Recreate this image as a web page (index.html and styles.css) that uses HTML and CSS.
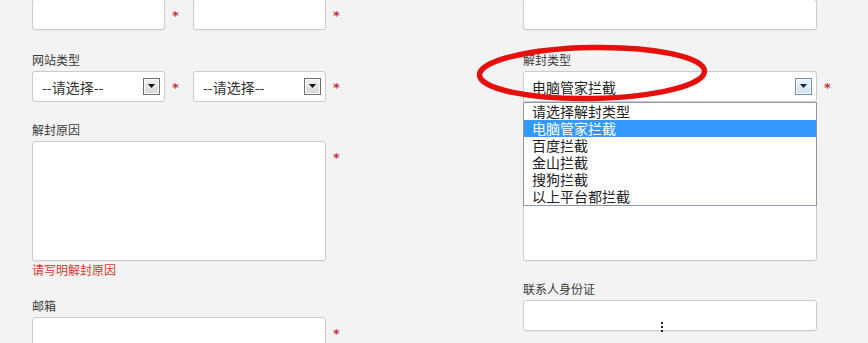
FILE: index.html
```html
<!DOCTYPE html>
<html lang="zh-CN">
<head>
<meta charset="utf-8">
<title>解封申请</title>
<link rel="stylesheet" href="styles.css">
</head>
<body>
<div class="page">
  <div class="form">
    <div class="col">
      <div class="row first">
        <input class="box half" type="text"><span class="req">*</span>
        <input class="box half" type="text"><span class="req">*</span>
      </div>
      <div class="field gap22">
        <div class="label">网站类型</div>
        <div class="row">
          <div class="select half">
            <span class="sel-text">--请选择--</span>
            <span class="sel-btn"><svg width="7" height="4" viewBox="0 0 7 4"><polygon points="0,0 7,0 3.5,4" fill="#111"/></svg></span>
          </div><span class="req">*</span>
          <div class="select half">
            <span class="sel-text">--请选择--</span>
            <span class="sel-btn"><svg width="7" height="4" viewBox="0 0 7 4"><polygon points="0,0 7,0 3.5,4" fill="#111"/></svg></span>
          </div><span class="req">*</span>
        </div>
      </div>
      <div class="field gap20">
        <div class="label">解封原因</div>
        <div class="row">
          <textarea class="box full area"></textarea><span class="req">*</span>
        </div>
        <div class="error">请写明解封原因</div>
      </div>
      <div class="field gap20">
        <div class="label">邮箱</div>
        <div class="row">
          <input class="box full" type="text"><span class="req">*</span>
        </div>
      </div>
    </div>

    <div class="col">
      <div class="row first">
        <input class="box full" type="text">
      </div>
      <div class="field gap22">
        <div class="label">解封类型</div>
        <div class="row">
          <div class="select full open">
            <span class="sel-text big">电脑管家拦截</span>
            <span class="sel-btn hot"><svg width="7" height="4" viewBox="0 0 7 4"><polygon points="0,0 7,0 3.5,4" fill="#1a2533"/></svg></span>
            <ul class="dropdown">
              <li>请选择解封类型</li>
              <li class="active">电脑管家拦截</li>
              <li>百度拦截</li>
              <li>金山拦截</li>
              <li>搜狗拦截</li>
              <li>以上平台都拦截</li>
            </ul>
          </div><span class="req">*</span>
        </div>
      </div>
      <div class="row gap39">
        <textarea class="box full area"></textarea>
      </div>
      <div class="field gap20">
        <div class="label">联系人身份证</div>
        <div class="row">
          <input class="box full" type="text">
        </div>
      </div>
    </div>
  </div>

  <svg class="mark" width="250" height="72" viewBox="0 0 250 72">
    <ellipse cx="122" cy="33" rx="112.5" ry="25.5" fill="none" stroke="#e5100c" stroke-width="5.5" transform="rotate(-1 122 33)"/>
  </svg>
  <span class="cursor"></span>
</div>
</body>
</html>
```

FILE: styles.css
```css
html, body {
  margin: 0;
  padding: 0;
  background: #f3f3f3;
}

body {
  font-family: "Noto Sans CJK SC", "Noto Sans", sans-serif;
  color: #333;
  overflow: hidden;
}

.page {
  position: relative;
  width: 868px;
  height: 343px;
  overflow: hidden;
}

.form {
  display: grid;
  grid-template-columns: 491px 322px;
  padding-left: 32px;
}

.col {
  display: flex;
  flex-direction: column;
}

.row {
  display: flex;
  align-items: flex-start;
}

.row.first {
  margin-top: -1px;
}

.field {
  display: flex;
  flex-direction: column;
}

.gap22 { margin-top: 22px; }
.gap20 { margin-top: 20px; }
.gap39 { margin-top: 39px; }

.label {
  font-size: 12px;
  line-height: 16px;
  height: 16px;
  margin-bottom: 3px;
  color: #3a3a3a;
}

.box {
  display: block;
  box-sizing: border-box;
  height: 31px;
  margin: 0;
  padding: 0 8px;
  border: 1px solid #cbcbcb;
  border-radius: 3px;
  background: #fff;
  box-shadow: 0 1px 1px rgba(0, 0, 0, 0.04);
  font: inherit;
  outline: none;
}

.half { width: 133px; }
.full { width: 294px; }

.area {
  height: 120px;
  resize: none;
}

.req {
  display: block;
  width: 21px;
  padding-left: 7px;
  height: 31px;
  line-height: 33px;
  font-size: 13px;
  font-family: "DejaVu Sans", sans-serif;
  font-weight: bold;
  color: #c7343a;
}

.select {
  position: relative;
  display: flex;
  align-items: center;
  justify-content: space-between;
  box-sizing: border-box;
  height: 31px;
  padding: 0 4px 0 9px;
  border: 1px solid #cbcbcb;
  border-radius: 3px;
  background: #fff;
}

.select.open {
  padding-left: 8px;
}

.sel-text {
  font-size: 14px;
  line-height: 18px;
  color: #333;
  padding-top: 1px;
}

.sel-text.big {
  color: #222;
}

.sel-btn {
  display: flex;
  align-items: center;
  justify-content: center;
  box-sizing: border-box;
  width: 17px;
  height: 17px;
  margin-top: -1px;
  border: 1px solid #6f6f6f;
  background: linear-gradient(#f2f2f2, #d6d6d6);
  box-shadow: inset 0 0 0 1px #fbfbfb;
}

.sel-btn.hot {
  border-color: #6d93b4;
  background: linear-gradient(#eaf4fc, #cfe2f3);
  box-shadow: inset 0 0 0 1px #f4f9fd;
}

.dropdown {
  position: absolute;
  left: -1px;
  right: -1px;
  top: 30px;
  margin: 0;
  padding: 0;
  list-style: none;
  border: 1px solid #8c9aa7;
  background: #fff;
  z-index: 2;
}

.dropdown li {
  height: 17px;
  line-height: 17px;
  padding-left: 8px;
  font-size: 14px;
  color: #222;
  white-space: nowrap;
}

.dropdown li.active {
  background: #3399ff;
  color: #fff;
}

.error {
  font-size: 12px;
  line-height: 16px;
  height: 16px;
  margin-top: 1px;
  color: #cc3b30;
}

.mark {
  position: absolute;
  left: 470px;
  top: 40px;
  z-index: 3;
}

.cursor {
  position: absolute;
  left: 661px;
  top: 322px;
  width: 2px;
  height: 12px;
  background: repeating-linear-gradient(#222 0 2px, transparent 2px 4px);
  z-index: 3;
}
```
